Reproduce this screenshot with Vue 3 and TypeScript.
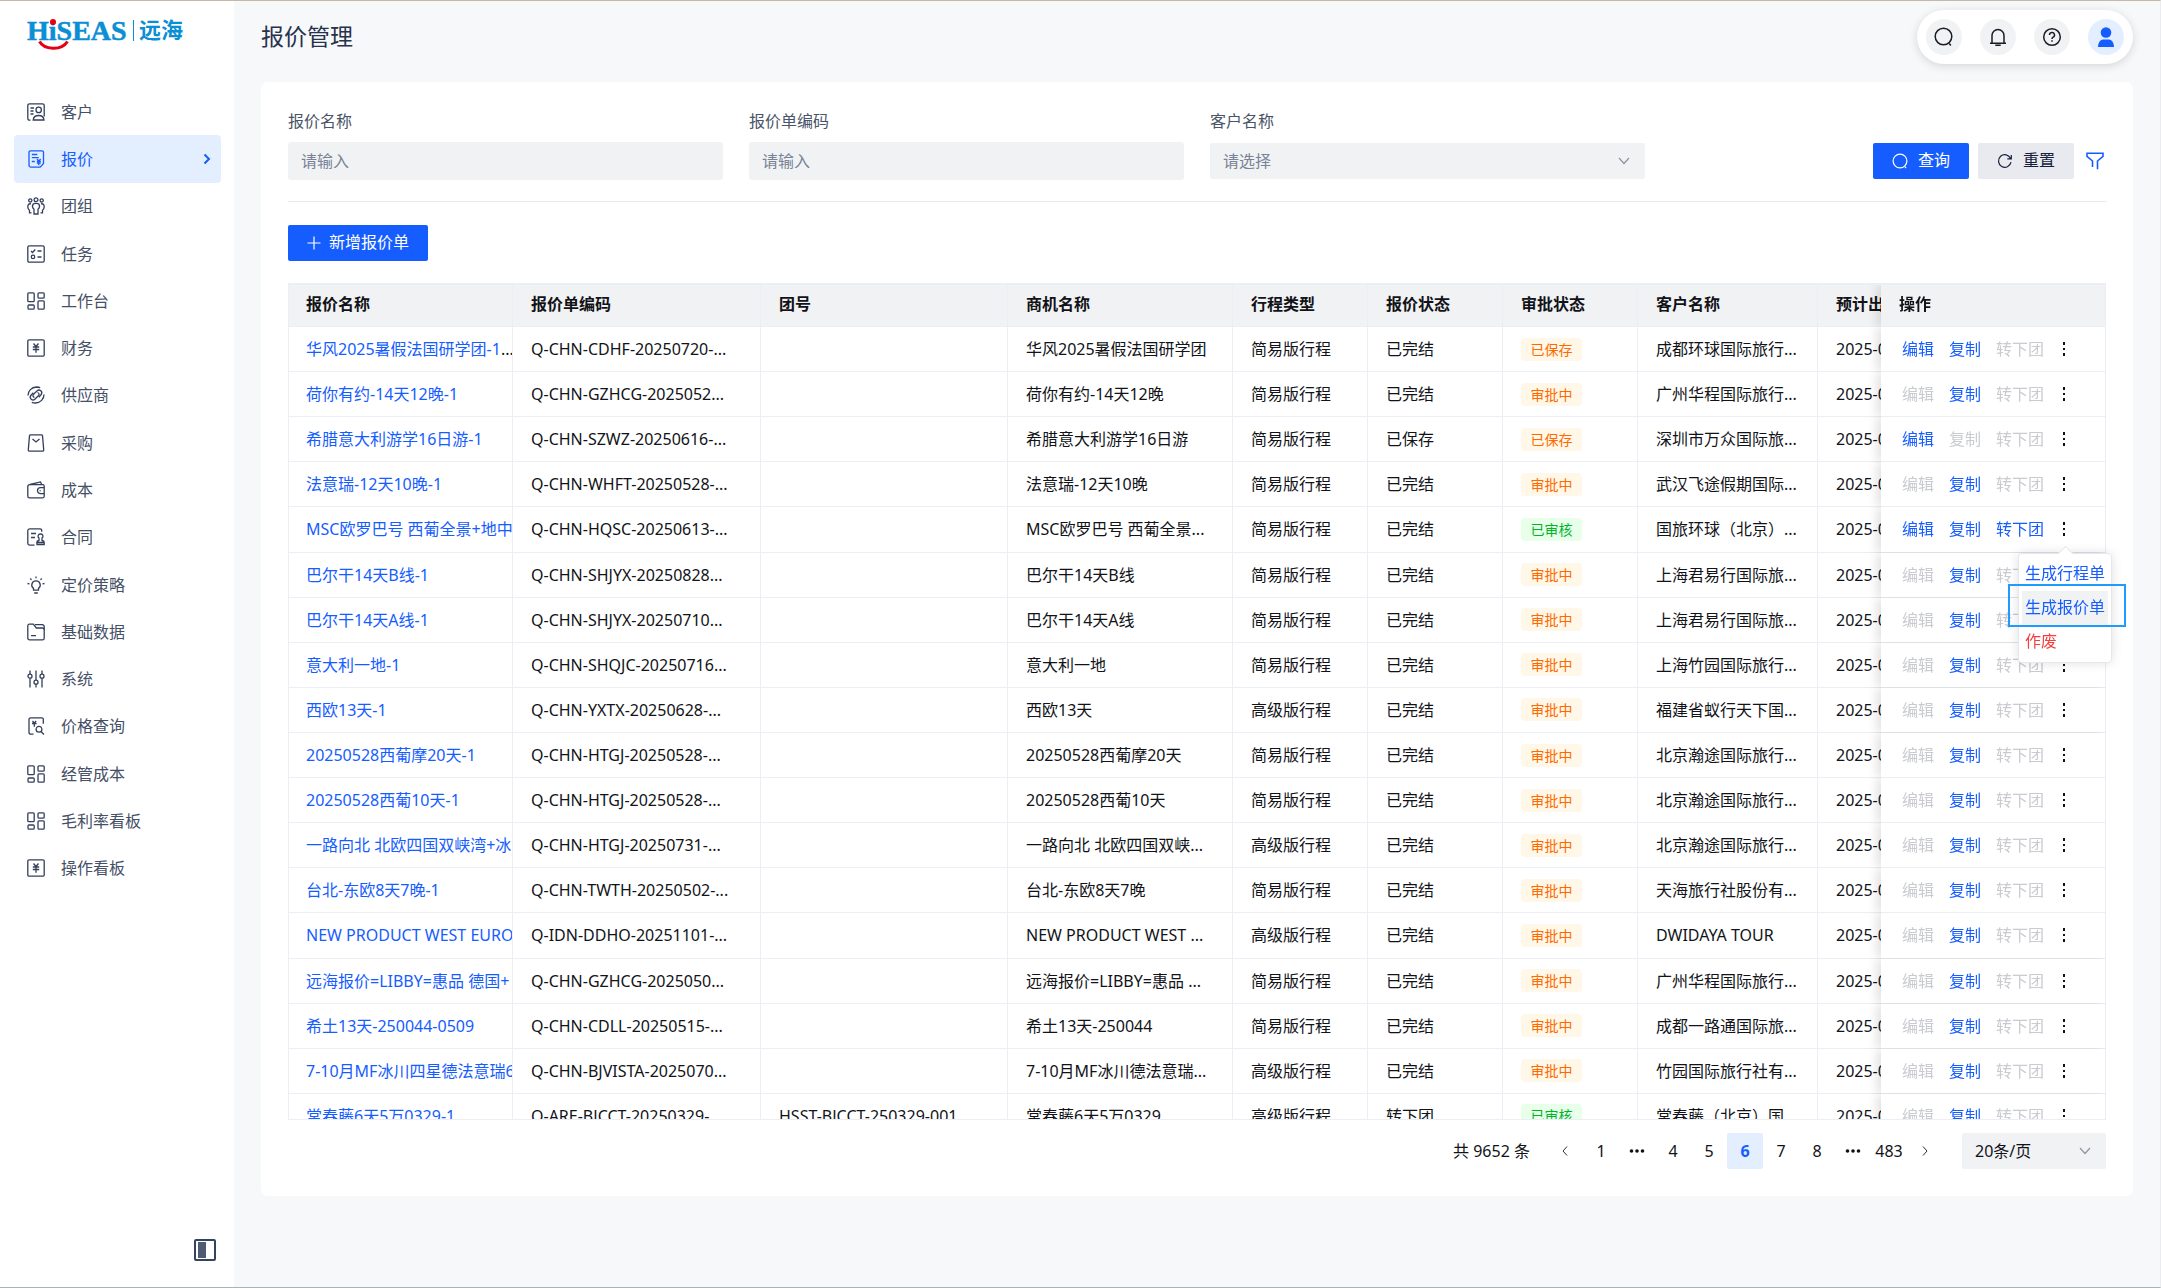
<script setup lang="ts">
import { ref } from 'vue'

interface NavItem {
  label: string
  icon: string
}

interface Quote {
  name: string
  more?: boolean
  code: string
  group?: string
  deal: string
  trip: string
  status: string
  audit: string
  client: string
  actions: [boolean, boolean, boolean]
}

const board = [
  'M1.800 .8h4.400a1 1 0 0 1 1 1v6.900a1 1 0 0 1-1 1H1.800a1 1 0 0 1-1-1V1.800a1 1 0 0 1 1-1z',
  'M12 .8h4.200a1 1 0 0 1 1 1v3.400a1 1 0 0 1-1 1H12a1 1 0 0 1-1-1V1.800a1 1 0 0 1 1-1z',
  'M2 13h4.200a1 1 0 0 1 1 1v2.200a1 1 0 0 1-1 1H2a1 1 0 0 1-1-1V14a1 1 0 0 1 1-1z',
  'M12 8.800h4.200a1 1 0 0 1 1 1v6.400a1 1 0 0 1-1 1H12a1 1 0 0 1-1-1V9.800a1 1 0 0 1 1-1z',
]
const yenBox = [
  'M2 .8h14a1.200 1.200 0 0 1 1.200 1.200v14a1.200 1.200 0 0 1-1.200 1.200H2A1.200 1.200 0 0 1 .8 16V2A1.200 1.200 0 0 1 2 .8z',
  'M6.500 4.500L9 7.500l2.500-3M5.800 8h6.400M5.800 10.500h6.400M9 7.500v6.300',
]

const icons: Record<string, string[]> = {
  client: [
    'M3.500 17.200H2.500A1.700 1.700 0 0 1 .8 15.500v-13A1.700 1.700 0 0 1 2.500.8h13a1.700 1.700 0 0 1 1.700 1.700v11',
    'M3.500 5h3.500M3.500 8h3M3.500 11h3',
    'M11.700 4.200a2.700 2.700 0 1 1 0 5.400 2.700 2.700 0 0 1 0-5.400z',
    'M6.200 17c.3-3 2.600-4.500 5.500-4.500s5 1.500 5.300 4.500z',
  ],
  quote: [
    'M4 .8h11a1.500 1.500 0 0 1 1.500 1.500V13.500l-3.300 3.700H4a2 2 0 0 1-2-2V2.300A1.500 1.500 0 0 1 3.500.8z',
    'M4.800 4.500h5.500M4.800 7.700h7M4.800 11.500h3',
    'M10 9l1.800 2.200L13.600 9M9.800 11.500h4M9.800 13.200h4M11.800 11.200v4',
  ],
  team: [
    'M9 .8a1.900 1.900 0 1 1 0 3.800A1.900 1.900 0 0 1 9 .8zM3.300 1.800a1.600 1.600 0 1 1 0 3.200 1.600 1.600 0 0 1 0-3.200zM14.700 1.800a1.600 1.600 0 1 1 0 3.200 1.600 1.600 0 0 1 0-3.200z',
    'M6 7.200c1-1 5-1 6 0 .8 1.500.3 3.800-1 5v4.800H7V12.200c-1.300-1.200-1.800-3.500-1-5z',
    'M4 6.800C1.500 6.500.8 8 .8 9.800c0 1.700.6 2.800 1.700 3.500v2.500h2M14 6.800c2.500-.3 3.200 1.200 3.200 3 0 1.700-.6 2.800-1.700 3.500v2.500h-2',
  ],
  task: [
    'M2.200.8h13.600a1.400 1.400 0 0 1 1.400 1.400v13.600a1.400 1.400 0 0 1-1.400 1.400H2.200A1.400 1.400 0 0 1 .8 15.800V2.200A1.400 1.400 0 0 1 2.200.8z',
    'M4 6l1.500 1.500L8.300 4.500M10.500 6h4M10.500 12h4',
    'M6 10.200a1.700 1.700 0 1 1 0 3.400 1.700 1.700 0 0 1 0-3.400z',
  ],
  board,
  yen: yenBox,
  supplier: [
    'M7.500 11.500C5.800 11 5.500 9.300 6.600 8.200L10.200 4.800c2.300-2 6 .9 4 3.700L11.700 11.200',
    'M10.500 6.500c1.700.5 2 2.200.9 3.300L7.800 13.200c-2.300 2-6-.9-4-3.700L6.300 6.800',
    'M1 9.500C1 5 4.500 1.200 9.500 1c1.500 0 2.700.2 3.700.7M17 8.500c0 4.500-3.500 8.300-8.500 8.500-1.500 0-2.700-.2-3.700-.7',
  ],
  buy: [
    'M3.500.8h11a1 1 0 0 1 1 .8l1.200 14a1.400 1.400 0 0 1-1.400 1.600H2.700a1.400 1.400 0 0 1-1.400-1.600l1.200-14a1 1 0 0 1 1-.8z',
    'M5.500 5l3.500 3 3.500-3',
  ],
  cost: [
    'M17.200 6.500V5.200A1.500 1.500 0 0 0 15.700 3.700H2.500A1.700 1.700 0 0 0 .8 5.400v9.800a1.700 1.700 0 0 0 1.700 1.700h13a1.700 1.700 0 0 0 1.700-1.700v-2.500',
    'M3 3.500L13.500.9l1.200 2.600M17.200 6.700H13.500a3 3 0 0 0 0 6h3.700zM13.200 9.200v1',
  ],
  contract: [
    'M7.500 17.200H2.800a2 2 0 0 1-2-2V2.800a2 2 0 0 1 2-2h10.400a1.500 1.500 0 0 1 1.500 1.500v1.500M4 5.500h5M4 9.500h4',
    'M13.500 6a2.200 2.200 0 0 1 1.500 4v2.500c1.500.2 2.200.7 2.200 2H9.800c0-1.300.7-1.800 2.200-2V10a2.200 2.200 0 0 1 1.500-4zM10 14.500v2h7.200v-2',
  ],
  idea: [
    'M9 4.800a4.200 4.200 0 0 1 2.500 7.600v1.800h-5v-1.800A4.200 4.200 0 0 1 9 4.800z',
    'M7.200 17h3.600M9 .5v1.800M3.300 2.500l1.200 1.400M14.700 2.500l-1.200 1.400M.5 7.500l2 .3M17.500 7.500l-2 .3',
  ],
  folder: [
    'M2.300 1.200h4l3 3.800h6.200a1.700 1.700 0 0 1 1.700 1.700v8.500a1.700 1.700 0 0 1-1.700 1.700h-13A1.700 1.700 0 0 1 .8 15.200V2.700a1.500 1.500 0 0 1 1.500-1.500zM4 12.700h5',
    'M8 1.700h7.200a2 2 0 0 1 2 2v3',
  ],
  sliders: [
    'M3 .5v3.700M3 8.200v9.300M9 .5v9.700M9 14.200v3.300M15 .5v3.700M15 8.200v9.300',
    'M3 4.200a2 2 0 1 1 0 4 2 2 0 0 1 0-4zM9 10.200a2 2 0 1 1 0 4 2 2 0 0 1 0-4zM15 4.200a2 2 0 1 1 0 4 2 2 0 0 1 0-4z',
  ],
  price: [
    'M6.500 17.200H3.700a1.700 1.700 0 0 1-1.700-1.700v-13A1.700 1.700 0 0 1 3.700.8h11.100a1.500 1.500 0 0 1 1.500 1.500v4.500',
    'M5.500 4l1.800 2.200L9.100 4M5 6.500h4.600M7.300 6.200v3.600',
    'M12 9.300a2.900 2.900 0 1 1 0 5.800 2.900 2.900 0 0 1 0-5.800zM14 14.500l3 3',
  ],
}

const navItems: NavItem[] = [
  { label: '客户', icon: 'client' },
  { label: '报价', icon: 'quote' },
  { label: '团组', icon: 'team' },
  { label: '任务', icon: 'task' },
  { label: '工作台', icon: 'board' },
  { label: '财务', icon: 'yen' },
  { label: '供应商', icon: 'supplier' },
  { label: '采购', icon: 'buy' },
  { label: '成本', icon: 'cost' },
  { label: '合同', icon: 'contract' },
  { label: '定价策略', icon: 'idea' },
  { label: '基础数据', icon: 'folder' },
  { label: '系统', icon: 'sliders' },
  { label: '价格查询', icon: 'price' },
  { label: '经管成本', icon: 'board' },
  { label: '毛利率看板', icon: 'board' },
  { label: '操作看板', icon: 'yen' },
]

const columns = ['报价名称', '报价单编码', '团号', '商机名称', '行程类型', '报价状态', '审批状态', '客户名称', '预计出发']

const easy = '简易版行程'
const pro = '高级版行程'
const done = '已完结'
const pending = '审批中'
const copyOnly: [boolean, boolean, boolean] = [false, true, false]

const rows: Quote[] = [
  { name: '华风2025暑假法国研学团-1', more: true, code: 'Q-CHN-CDHF-20250720-...', deal: '华风2025暑假法国研学团', trip: easy, status: done, audit: '已保存', client: '成都环球国际旅行...', actions: [true, true, false] },
  { name: '荷你有约-14天12晚-1', code: 'Q-CHN-GZHCG-2025052...', deal: '荷你有约-14天12晚', trip: easy, status: done, audit: pending, client: '广州华程国际旅行...', actions: copyOnly },
  { name: '希腊意大利游学16日游-1', code: 'Q-CHN-SZWZ-20250616-...', deal: '希腊意大利游学16日游', trip: easy, status: '已保存', audit: '已保存', client: '深圳市万众国际旅...', actions: [true, false, false] },
  { name: '法意瑞-12天10晚-1', code: 'Q-CHN-WHFT-20250528-...', deal: '法意瑞-12天10晚', trip: easy, status: done, audit: pending, client: '武汉飞途假期国际...', actions: copyOnly },
  { name: 'MSC欧罗巴号 西葡全景+地中', code: 'Q-CHN-HQSC-20250613-...', deal: 'MSC欧罗巴号 西葡全景...', trip: easy, status: done, audit: '已审核', client: '国旅环球（北京）...', actions: [true, true, true] },
  { name: '巴尔干14天B线-1', code: 'Q-CHN-SHJYX-20250828...', deal: '巴尔干14天B线', trip: easy, status: done, audit: pending, client: '上海君易行国际旅...', actions: copyOnly },
  { name: '巴尔干14天A线-1', code: 'Q-CHN-SHJYX-20250710...', deal: '巴尔干14天A线', trip: easy, status: done, audit: pending, client: '上海君易行国际旅...', actions: copyOnly },
  { name: '意大利一地-1', code: 'Q-CHN-SHQJC-20250716...', deal: '意大利一地', trip: easy, status: done, audit: pending, client: '上海竹园国际旅行...', actions: copyOnly },
  { name: '西欧13天-1', code: 'Q-CHN-YXTX-20250628-...', deal: '西欧13天', trip: pro, status: done, audit: pending, client: '福建省蚁行天下国...', actions: copyOnly },
  { name: '20250528西葡摩20天-1', code: 'Q-CHN-HTGJ-20250528-...', deal: '20250528西葡摩20天', trip: easy, status: done, audit: pending, client: '北京瀚途国际旅行...', actions: copyOnly },
  { name: '20250528西葡10天-1', code: 'Q-CHN-HTGJ-20250528-...', deal: '20250528西葡10天', trip: easy, status: done, audit: pending, client: '北京瀚途国际旅行...', actions: copyOnly },
  { name: '一路向北 北欧四国双峡湾+冰', code: 'Q-CHN-HTGJ-20250731-...', deal: '一路向北 北欧四国双峡...', trip: pro, status: done, audit: pending, client: '北京瀚途国际旅行...', actions: copyOnly },
  { name: '台北-东欧8天7晚-1', code: 'Q-CHN-TWTH-20250502-...', deal: '台北-东欧8天7晚', trip: easy, status: done, audit: pending, client: '天海旅行社股份有...', actions: copyOnly },
  { name: 'NEW PRODUCT WEST EURO', code: 'Q-IDN-DDHO-20251101-...', deal: 'NEW PRODUCT WEST ...', trip: pro, status: done, audit: pending, client: 'DWIDAYA TOUR', actions: copyOnly },
  { name: '远海报价=LIBBY=惠品 德国+', code: 'Q-CHN-GZHCG-2025050...', deal: '远海报价=LIBBY=惠品 ...', trip: easy, status: done, audit: pending, client: '广州华程国际旅行...', actions: copyOnly },
  { name: '希土13天-250044-0509', code: 'Q-CHN-CDLL-20250515-...', deal: '希土13天-250044', trip: easy, status: done, audit: pending, client: '成都一路通国际旅...', actions: copyOnly },
  { name: '7-10月MF冰川四星德法意瑞6', code: 'Q-CHN-BJVISTA-2025070...', deal: '7-10月MF冰川德法意瑞...', trip: pro, status: done, audit: pending, client: '竹园国际旅行社有...', actions: copyOnly },
  { name: '常春藤6天5万0329-1', code: 'Q-ARE-BJCCT-20250329-', deal: '常春藤6天5万0329', group: 'HSST-BJCCT-250329-001', trip: pro, status: '转下团', audit: '已审核', client: '常春藤（北京）国', actions: copyOnly },
]

const actionLabels = ['编辑', '复制', '转下团']
const pages = ['1', 'more', '4', '5', '6', '7', '8', 'more', '483']

const quoteName = ref('')
const quoteCode = ref('')
const client = ref('')
const pageSize = ref('20')
</script>

<template>
  <div class="app">
    <aside class="sidebar">
      <svg class="logo" width="160" height="36" viewBox="0 0 160 36" role="img" aria-label="HiSEAS 远海">
        <text class="logo-latin" x="0" y="23">HiSEAS</text>
        <circle cx="26" cy="5" r="3" fill="#e60012" />
        <path d="M12.500 24.500C17 32.500 34 34.500 40.500 24.500" fill="none" stroke="#e60012" stroke-width="3" />
        <path d="M106.500 3v21" stroke="#0a8fd4" stroke-width="1" />
        <text class="logo-cjk" x="112" y="21">远海</text>
      </svg>
      <nav class="nav">
        <a v-for="item in navItems" :key="item.label" href="#" class="nav-item" :class="{ active: item.icon === 'quote' }">
          <svg class="nav-icon" width="18" height="18" viewBox="0 0 18 18">
            <path v-for="d in icons[item.icon]" :key="d" :d="d" />
          </svg>
          <span class="nav-label">{{ item.label }}</span>
          <svg v-if="item.icon === 'quote'" class="nav-arrow" width="8" height="12" viewBox="0 0 8 12">
            <path d="M1.500 1.500L6 6l-4.500 4.500" />
          </svg>
        </a>
      </nav>
      <button class="collapse" type="button" aria-label="收起菜单">
        <svg width="22" height="22" viewBox="0 0 22 22">
          <rect x="1" y="1" width="20" height="20" rx="1" fill="none" stroke="#34435e" stroke-width="2" />
          <rect x="4" y="3" width="8" height="16" fill="#4e5b73" />
        </svg>
      </button>
    </aside>

    <div class="main">
      <header class="topbar">
        <h1 class="title">报价管理</h1>
        <div class="tools">
          <button class="tool" type="button" aria-label="搜索">
            <svg width="20" height="20" viewBox="0 0 20 20"><circle cx="9.500" cy="9.500" r="8.300" /><path d="M15.300 16.500l1.500 2" /></svg>
          </button>
          <button class="tool" type="button" aria-label="通知">
            <svg width="20" height="20" viewBox="0 0 20 20"><path d="M4 16V8.500a6 6 0 0 1 12 0V16M2 16.200h16M7.300 18.300h5.400" /></svg>
          </button>
          <button class="tool" type="button" aria-label="帮助">
            <svg width="20" height="20" viewBox="0 0 20 20"><circle cx="10" cy="10" r="8.300" /><path d="M7.500 8a2.500 2.500 0 1 1 3.600 2.200c-.8.4-1.100.8-1.100 1.800M10 13.300v1.500" /></svg>
          </button>
          <button class="tool user" type="button" aria-label="用户">
            <svg width="20" height="20" viewBox="0 0 20 20"><circle cx="10" cy="5.500" r="5.300" /><path d="M2 20c0-4.500 2.500-7.500 5-7.500h6c2.500 0 5 3 5 7.500z" /></svg>
          </button>
        </div>
      </header>

      <main class="card">
        <form class="filters" @submit.prevent>
          <div class="field">
            <label for="quote-name">报价名称</label>
            <input id="quote-name" v-model="quoteName" type="text" placeholder="请输入" />
          </div>
          <div class="field">
            <label for="quote-code">报价单编码</label>
            <input id="quote-code" v-model="quoteCode" type="text" placeholder="请输入" />
          </div>
          <div class="field">
            <label for="client">客户名称</label>
            <div class="select">
              <select id="client" v-model="client" class="empty">
                <option value="">请选择</option>
              </select>
              <svg width="12" height="8" viewBox="0 0 12 8"><path d="M1 1l5 5.500L11 1" /></svg>
            </div>
          </div>
          <div class="filter-actions">
            <button class="btn primary" type="submit">
              <svg width="16" height="16" viewBox="0 0 16 16"><circle cx="8" cy="8" r="6.900" /><path d="M12.800 13.500l1.200 1.700" /></svg>
              <span>查询</span>
            </button>
            <button class="btn plain" type="reset">
              <svg width="16" height="16" viewBox="0 0 16 16"><path d="M14 9.200A6.300 6.300 0 1 1 13.600 5.500M14.300 2v3.800h-4" /></svg>
              <span>重置</span>
            </button>
            <button class="filter-toggle" type="button" aria-label="筛选">
              <svg width="18" height="18" viewBox="0 0 18 18"><path d="M6.500 15V9L1 4.300V1.200h16v3.100L11.500 9v8.200" /></svg>
            </button>
          </div>
        </form>

        <div class="toolbar">
          <button class="btn primary add" type="button">
            <svg width="14" height="14" viewBox="0 0 14 14"><path d="M7 .5v13M.5 7h13" /></svg>
            <span>新增报价单</span>
          </button>
        </div>

        <div class="table-area">
          <div class="table-clip">
            <table>
              <colgroup>
                <col class="w-name" /><col class="w-code" /><col class="w-group" /><col class="w-deal" />
                <col class="w-state" /><col class="w-state" /><col class="w-state" />
                <col class="w-client" /><col class="w-client" /><col class="w-ops" />
              </colgroup>
              <thead>
                <tr>
                  <th v-for="c in columns" :key="c" scope="col">{{ c }}</th>
                  <th class="ops" scope="col">操作</th>
                </tr>
              </thead>
              <tbody>
                <tr v-for="row in rows" :key="row.deal">
                  <td class="name"><a href="#">{{ row.name }}</a><span v-if="row.more">...</span></td>
                  <td>{{ row.code }}</td>
                  <td>{{ row.group }}</td>
                  <td>{{ row.deal }}</td>
                  <td>{{ row.trip }}</td>
                  <td>{{ row.status }}</td>
                  <td><span class="tag" :class="{ ok: row.audit === '已审核' }">{{ row.audit }}</span></td>
                  <td>{{ row.client }}</td>
                  <td>2025-0</td>
                  <td class="ops">
                    <div class="actions">
                      <button v-for="(label, i) in actionLabels" :key="label" type="button" :disabled="!row.actions[i]">{{ label }}</button>
                      <button type="button" class="dots" aria-label="更多">
                        <svg width="10" height="16" viewBox="0 0 10 16"><path d="M4 1h2v3H4zM4 7h2v2H4zM4 12h2v3H4z" /></svg>
                      </button>
                    </div>
                  </td>
                </tr>
              </tbody>
            </table>
          </div>
          <div class="popover" role="menu">
            <button type="button" role="menuitem">生成行程单</button>
            <button type="button" role="menuitem" class="hover">生成报价单</button>
            <button type="button" role="menuitem" class="danger">作废</button>
            <div class="focus-frame"></div>
          </div>
        </div>

        <footer class="pagination">
          <span class="total">共 9652 条</span>
          <div class="pager">
            <button type="button" aria-label="上一页">
              <svg width="8" height="10" viewBox="0 0 8 10"><path d="M6 .5L2 5l4 4.500" /></svg>
            </button>
            <button v-for="(p, i) in pages" :key="i" type="button" :class="{ current: p === '6' }">
              <svg v-if="p === 'more'" width="16" height="4" viewBox="0 0 16 4" class="ellipsis">
                <circle cx="2.500" cy="2" r="1.800" /><circle cx="8" cy="2" r="1.800" /><circle cx="13.500" cy="2" r="1.800" />
              </svg>
              <template v-else>{{ p }}</template>
            </button>
            <button type="button" aria-label="下一页">
              <svg width="8" height="10" viewBox="0 0 8 10"><path d="M2 .5L6 5l-4 4.500" /></svg>
            </button>
          </div>
          <div class="select size">
            <select v-model="pageSize" aria-label="每页条数">
              <option value="20">20条/页</option>
            </select>
            <svg width="12" height="8" viewBox="0 0 12 8"><path d="M1 1l5 5.500L11 1" /></svg>
          </div>
        </footer>
      </main>
    </div>
  </div>
</template>

<style>
body {
  margin: 0;
}
</style>

<style scoped>
.app,
.app * {
  box-sizing: border-box;
}

.app {
  display: flex;
  min-height: 100vh;
  border-top: 1px solid #c4b9a4;
  border-bottom: 1px solid #a8b5b4;
  border-right: 1px solid #e9ebef;
  background: #f7f8fa;
  color: #111318;
  font-family: 'Noto Sans', 'Noto Sans CJK SC', sans-serif;
  font-size: 16px;
  line-height: 24px;
}

button,
input,
select {
  margin: 0;
  padding: 0;
  border: 0;
  background: none;
  color: inherit;
  font: inherit;
}

a {
  text-decoration: none;
}

svg {
  flex: none;
  display: block;
}

/* sidebar */
.sidebar {
  flex: none;
  display: flex;
  flex-direction: column;
  width: 234px;
  padding: 16px 13px 26px 14px;
  background: #fff;
}

.logo {
  margin-left: 13px;
  overflow: visible;
}

.logo-latin {
  font-family: 'Liberation Serif', serif;
  font-size: 28px;
  font-weight: 700;
  fill: #0a8fd4;
  stroke: #0a8fd4;
  stroke-width: 0.5;
}

.logo-cjk {
  font-family: 'Noto Sans CJK SC', sans-serif;
  font-size: 22px;
  font-weight: 700;
  fill: #0a8fd4;
}

.nav {
  display: grid;
  grid-auto-rows: 1fr;
  height: 804px;
  margin-top: 35px;
}

.nav-item {
  display: flex;
  align-items: center;
  padding: 0 10px 0 13px;
  border-radius: 4px;
  color: #454f66;
}

.nav-icon {
  fill: none;
  stroke: #343f5c;
  stroke-width: 1.3;
}

.nav-label {
  flex: 1;
  margin-left: 16px;
}

.nav-item.active {
  background: #e3efff;
  color: #165dff;
}

.active .nav-icon {
  stroke: #165dff;
}

.nav-arrow {
  fill: none;
  stroke: #165dff;
  stroke-width: 2;
}

.collapse {
  align-self: flex-end;
  margin-top: auto;
  margin-right: 5px;
}

/* top bar */
.main {
  flex: 1;
  min-width: 0;
  padding: 9px 27px 0;
}

.topbar {
  display: flex;
  align-items: center;
  justify-content: space-between;
  margin-bottom: 18px;
}

.title {
  margin: 0;
  padding-bottom: 2px;
  font-size: 23px;
  font-weight: 400;
  line-height: 32px;
  color: #27324d;
}

.tools {
  display: flex;
  gap: 18px;
  padding: 9px;
  border-radius: 27px;
  background: #fff;
  box-shadow: 0 2px 10px rgba(0, 0, 0, 0.14);
}

.tool {
  display: flex;
  align-items: center;
  justify-content: center;
  width: 36px;
  height: 36px;
  border-radius: 18px;
  background: #f1f2f4;
}

.tool svg {
  fill: none;
  stroke: #1b1d22;
  stroke-width: 1.5;
}

.tool.user {
  background: #e3efff;
}

.tool.user svg {
  fill: #165dff;
  stroke: none;
}

/* card */
.card {
  padding: 27px;
  border-radius: 7px;
  background: #fff;
}

.filters {
  display: grid;
  grid-template-columns: repeat(4, 1fr);
  column-gap: 26px;
  padding-bottom: 21px;
  border-bottom: 1px solid #e8e9ed;
}

.field {
  display: flex;
  flex-direction: column;
  gap: 9px;
}

.field label {
  color: #4a5468;
}

.field input {
  width: 100%;
  height: 38px;
  padding: 0 13px;
  border-radius: 3px;
  background: #f1f2f4;
}

.field input::placeholder {
  color: #788396;
  opacity: 1;
}

.select {
  display: flex;
  align-items: center;
  position: relative;
  height: 38px;
}

.select select {
  appearance: none;
  width: 100%;
  height: 36px;
  padding: 0 36px 0 13px;
  border-radius: 2px;
  background: #f1f2f4;
}

.select select.empty {
  color: #788396;
}

.select svg {
  position: absolute;
  right: 15px;
  fill: none;
  stroke: #8c93a3;
  stroke-width: 1.2;
  pointer-events: none;
}

.filter-actions {
  display: flex;
  align-items: center;
  align-self: end;
  justify-content: flex-end;
  height: 38px;
}

.btn {
  display: flex;
  align-items: center;
  gap: 10px;
  height: 36px;
  padding: 0 19px;
  border-radius: 2px;
}

.btn span {
  padding-bottom: 2px;
}

.btn svg {
  fill: none;
  stroke: currentColor;
  stroke-width: 1.2;
}

.btn.primary {
  background: #165dff;
  color: #fff;
}

.btn.plain {
  margin-left: 9px;
  background: #e9eaf0;
  color: #16203c;
}

.filter-toggle {
  margin-left: 12px;
  margin-right: 2px;
}

.filter-toggle svg {
  fill: none;
  stroke: #165dff;
  stroke-width: 1.6;
}

.toolbar {
  display: flex;
  padding: 23px 0 22px;
}

.btn.add {
  gap: 8px;
}

/* table */
.table-area {
  position: relative;
}

.table-clip {
  height: 837px;
  overflow: hidden;
  border: solid #ebeef5;
  border-width: 2px 0 1px 1px;
}

table {
  width: 100%;
  height: 854px;
  min-width: 1934px;
  table-layout: fixed;
  border-collapse: separate;
  border-spacing: 0;
}

.w-name {
  width: 224px;
}

.w-code {
  width: 248px;
}

.w-group {
  width: 247px;
}

.w-deal,
.w-ops {
  width: 225px;
}

.w-state {
  width: 135px;
}

.w-client {
  width: 180px;
}

th,
td {
  height: 45px;
  padding: 0 0 0 18px;
  border: solid #ebeef5;
  border-width: 0 1px 1px 0;
  overflow: hidden;
  text-align: left;
  white-space: nowrap;
}

th:first-child,
td:first-child {
  padding-left: 17px;
}

th {
  height: 42px;
  padding-bottom: 4px;
  background: #f1f2f4;
  font-weight: 700;
}

td {
  background: #fff;
}

.name a {
  color: #165dff;
}

.tag {
  display: block;
  width: 61px;
  border-radius: 4px;
  background: #fff7e8;
  color: #ff6a00;
  font-size: 14px;
  line-height: 23px;
  text-align: center;
}

.tag.ok {
  background: #e8ffea;
  color: #00b42a;
}

.ops {
  position: sticky;
  right: 0;
  overflow: visible;
  box-shadow: -4px 0 10px rgba(0, 0, 0, 0.12);
  clip-path: inset(0 0 0 -14px);
}

.actions {
  display: flex;
  align-items: center;
  gap: 15px;
  padding-left: 3px;
}

.actions button {
  color: #165dff;
}

.actions button:disabled {
  color: #c9cbd0;
}

.dots svg {
  fill: #111;
}

/* row menu */
.popover {
  position: absolute;
  top: 270px;
  right: -6px;
  display: flex;
  flex-direction: column;
  width: 94px;
  padding: 3px;
  border: 1px solid #e5e7ec;
  border-radius: 4px;
  background: #fff;
  box-shadow: 0 0 12px rgba(0, 0, 0, 0.12);
}

.popover::before {
  content: '';
  position: absolute;
  top: -6px;
  left: 41px;
  width: 10px;
  height: 10px;
  border: solid #e5e7ec;
  border-width: 1px 0 0 1px;
  background: #fff;
  transform: rotate(45deg);
}

.popover button {
  height: 34px;
  padding: 0 3px 2px;
  color: #165dff;
  text-align: left;
  white-space: nowrap;
}

.popover .hover {
  background: #f1f2f4;
}

.popover .danger {
  color: #f53f3f;
}

.focus-frame {
  position: absolute;
  top: 30px;
  left: -11px;
  width: 118px;
  height: 43px;
  border: 2px solid #1e9bff;
  pointer-events: none;
}

/* pagination */
.pagination {
  display: flex;
  align-items: center;
  justify-content: flex-end;
  margin-top: 13px;
}

.pager {
  display: flex;
  margin: 0 19px 0 17px;
}

.pager button {
  display: flex;
  align-items: center;
  justify-content: center;
  width: 36px;
  height: 36px;
  border-radius: 2px;
}

.pager svg {
  fill: none;
  stroke: #2b2f38;
}

.pager .ellipsis {
  fill: #111;
  stroke: none;
}

.pager .current {
  background: #e3efff;
  color: #165dff;
  font-weight: 700;
}

.select.size {
  width: 144px;
  height: 36px;
}
</style>
